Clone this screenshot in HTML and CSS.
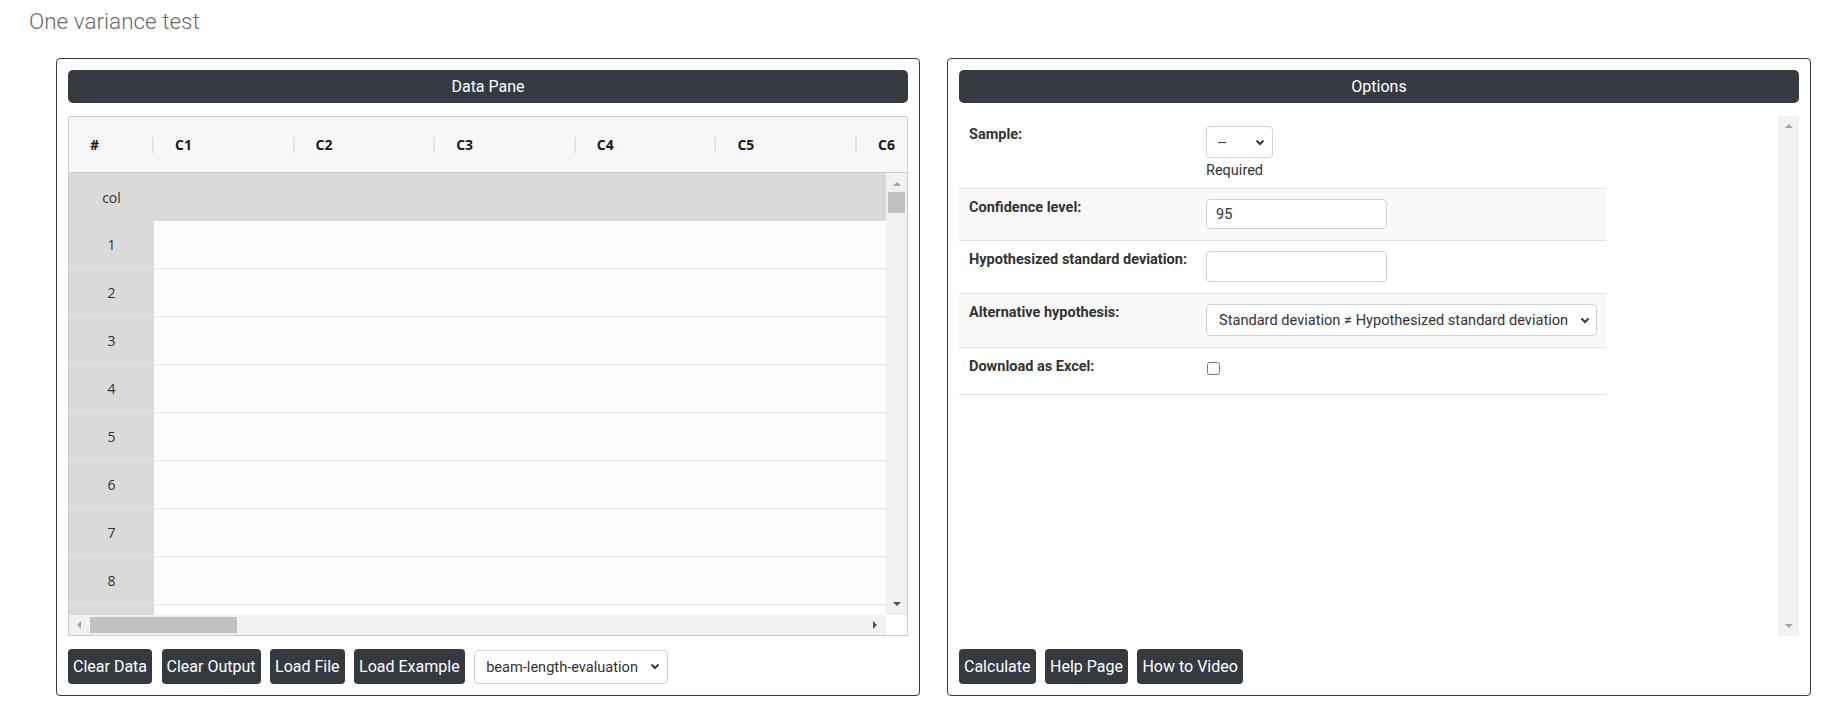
FILE: index.html
```html
<!DOCTYPE html>
<html lang="en">
  <head>
    <meta charset="UTF-8" />
    <meta name="viewport" content="width=device-width, initial-scale=1.0" />
    <title>One variance test</title>
    <link rel="stylesheet" href="styles.css">
  </head>
  <body>
    <h1 class="page-title">One variance test</h1>

    <div class="panels">
      <!-- データ入力 -->
      <section class="panel">
        <div class="panel-head">Data Pane</div>

        <div class="grid">
          <div class="grid-head">
            <div class="gh-index">#</div>
            <div class="gh-cell">C1</div>
            <div class="gh-cell">C2</div>
            <div class="gh-cell">C3</div>
            <div class="gh-cell">C4</div>
            <div class="gh-cell">C5</div>
            <div class="gh-cell">C6</div>
          </div>

          <div class="grid-main">
            <div class="grid-rows">
              <div class="grid-row row-col"><div class="rh">col</div><div class="cells"></div></div>
              <div class="grid-row"><div class="rh">1</div><div class="cells"></div></div>
              <div class="grid-row"><div class="rh">2</div><div class="cells"></div></div>
              <div class="grid-row"><div class="rh">3</div><div class="cells"></div></div>
              <div class="grid-row"><div class="rh">4</div><div class="cells"></div></div>
              <div class="grid-row"><div class="rh">5</div><div class="cells"></div></div>
              <div class="grid-row"><div class="rh">6</div><div class="cells"></div></div>
              <div class="grid-row"><div class="rh">7</div><div class="cells"></div></div>
              <div class="grid-row"><div class="rh">8</div><div class="cells"></div></div>
              <div class="grid-row"><div class="rh"></div><div class="cells"></div></div>
            </div>
            <div class="vscroll">
              <span class="arrow up off"></span>
              <span class="vthumb"></span>
              <span class="vfill"></span>
              <span class="arrow down"></span>
            </div>
          </div>

          <div class="hscroll-row">
            <div class="hscroll">
              <span class="arrow left off"></span>
              <span class="hthumb"></span>
              <span class="hfill"></span>
              <span class="arrow right"></span>
            </div>
            <div class="corner"></div>
          </div>
        </div>

        <div class="toolbar">
          <button class="btn">Clear Data</button>
          <button class="btn">Clear Output</button>
          <button class="btn">Load File</button>
          <button class="btn">Load Example</button>
          <div class="select example-select">
            <select><option>beam-length-evaluation</option></select>
            <svg width="10" height="7" viewBox="0 0 10 7"><path d="M1.5 1.5l3.5 3.5 3.5-3.5" fill="none" stroke="#343a40" stroke-width="2"/></svg>
          </div>
        </div>
      </section>

      <!-- オプション -->
      <section class="panel">
        <div class="panel-head">Options</div>

        <div class="options">
          <div class="opt-table">
            <div class="opt-row sample-row">
              <div class="opt-label">Sample:</div>
              <div class="opt-value">
                <div class="select sample-select">
                  <select><option>--</option></select>
                  <svg width="10" height="7" viewBox="0 0 10 7"><path d="M1.5 1.5l3.5 3.5 3.5-3.5" fill="none" stroke="#343a40" stroke-width="2"/></svg>
                </div>
                <div class="hint">Required</div>
              </div>
            </div>
            <div class="opt-row striped">
              <div class="opt-label">Confidence level:</div>
              <div class="opt-value"><input class="text-input conf" type="text" value="95" /></div>
            </div>
            <div class="opt-row">
              <div class="opt-label">Hypothesized standard deviation:</div>
              <div class="opt-value"><input class="text-input hyp" type="text" value="" /></div>
            </div>
            <div class="opt-row striped">
              <div class="opt-label">Alternative hypothesis:</div>
              <div class="opt-value">
                <div class="select alt-select">
                  <select><option>Standard deviation ≠ Hypothesized standard deviation</option></select>
                  <svg width="10" height="7" viewBox="0 0 10 7"><path d="M1.5 1.5l3.5 3.5 3.5-3.5" fill="none" stroke="#343a40" stroke-width="2"/></svg>
                </div>
              </div>
            </div>
            <div class="opt-row">
              <div class="opt-label">Download as Excel:</div>
              <div class="opt-value check-cell"><input type="checkbox" class="check" /></div>
            </div>
          </div>
          <div class="vscroll opt-scroll">
            <span class="arrow up off"></span>
            <span class="vfill"></span>
            <span class="arrow down off"></span>
          </div>
        </div>

        <div class="toolbar">
          <button class="btn">Calculate</button>
          <button class="btn">Help Page</button>
          <button class="btn">How to Video</button>
        </div>
      </section>
    </div>
  </body>
</html>
```

FILE: styles.css
```css
body {
  margin: 0;
  font-family: Roboto, "Liberation Sans", sans-serif;
  color: #333;
  background: #fff;
}
.page-title {
  margin: 0;
  padding: 7px 0 0 29px;
  font-size: 22.5px;
  line-height: 28px;
  font-weight: 300;
  color: #6a6a6a;
}
.panels {
  display: flex;
  gap: 27px;
  margin-top: 23px;
  padding-left: 56px;
}
.panel {
  width: 864px;
  height: 638px;
  box-sizing: border-box;
  border: 1px solid #343a40;
  border-radius: 4px;
  padding: 11px;
  display: flex;
  flex-direction: column;
  gap: 13px;
}
.panel-head {
  height: 33px;
  line-height: 33px;
  background: #343a40;
  color: #fff;
  border-radius: 5px;
  text-align: center;
  font-size: 16px;
}

/* データグリッド */
.grid {
  height: 520px;
  box-sizing: border-box;
  border: 1px solid #cccccc;
  display: flex;
  flex-direction: column;
  font-family: "Open Sans", "Noto Sans", sans-serif;
  font-size: 14px;
}
.grid-head {
  height: 55px;
  flex: none;
  display: flex;
  align-items: center;
  background: #f7f7f7;
  border-bottom: 1px solid #cccccc;
  overflow: hidden;
  font-weight: 700;
  color: #1a1a1a;
}
.gh-index {
  width: 83px;
  flex: none;
  box-sizing: border-box;
  padding-left: 21px;
}
.gh-cell {
  width: 140.6px;
  flex: none;
  box-sizing: border-box;
  display: flex;
  align-items: center;
  gap: 21px;
}
.gh-cell::before {
  content: "";
  width: 2px;
  height: 16px;
  background: #e2e2e2;
}
.grid-main {
  flex: 1;
  display: flex;
  min-height: 0;
}
.grid-rows {
  flex: 1;
  overflow: hidden;
}
.grid-row {
  height: 48px;
  display: flex;
}
.rh {
  width: 85px;
  flex: none;
  box-sizing: border-box;
  background: #dadada;
  border-bottom: 1px solid #e6e6e6;
  display: flex;
  align-items: center;
  justify-content: center;
  color: #333;
}
.cells {
  flex: 1;
  background: #fdfdfd;
  border-bottom: 1px solid #e4e4e4;
}
.row-col .rh,
.row-col .cells {
  background: #dadada;
  border-bottom: none;
}

/* スクロールバー */
.vscroll {
  width: 21px;
  flex: none;
  background: #f1f1f1;
  display: flex;
  flex-direction: column;
  align-items: center;
}
.vscroll .arrow.up {
  margin-top: 9px;
}
.vscroll .arrow.down {
  margin-bottom: 9px;
}
.vthumb {
  width: 17px;
  height: 21px;
  margin-top: 6px;
  background: #c1c1c1;
}
.vfill,
.hfill {
  flex: 1;
}
.hscroll-row {
  height: 20px;
  flex: none;
  display: flex;
}
.hscroll {
  flex: 1;
  background: #f1f1f1;
  display: flex;
  align-items: center;
}
.hscroll .arrow.left {
  margin-left: 8px;
}
.hscroll .arrow.right {
  margin-right: 9px;
}
.hthumb {
  width: 147px;
  height: 16px;
  margin-left: 9px;
  background: #c1c1c1;
}
.corner {
  width: 21px;
  background: #fff;
}
.arrow {
  width: 0;
  height: 0;
  border: 4px solid transparent;
}
.arrow.up {
  border-top: none;
  border-bottom-color: #505050;
}
.arrow.down {
  border-bottom: none;
  border-top-color: #505050;
}
.arrow.left {
  border-left: none;
  border-right-color: #505050;
}
.arrow.right {
  border-right: none;
  border-left-color: #505050;
}
.arrow.up.off {
  border-bottom-color: #a3a3a3;
}
.arrow.down.off {
  border-top-color: #a3a3a3;
}
.arrow.left.off {
  border-right-color: #a3a3a3;
}

/* ボタン */
.toolbar {
  height: 35px;
  flex: none;
  display: flex;
  align-items: center;
  gap: 9.5px;
}
.btn {
  height: 35px;
  padding: 0 5px;
  border: none;
  border-radius: 4px;
  background: #343a40;
  color: #fff;
  font-family: Roboto, "Liberation Sans", sans-serif;
  font-size: 16px;
  cursor: pointer;
}

/* セレクト */
.select {
  display: flex;
  align-items: center;
  box-sizing: border-box;
  border: 1px solid #ced4da;
  border-radius: 4px;
  background: #fff;
}
.select select {
  flex: 1;
  min-width: 0;
  appearance: none;
  -webkit-appearance: none;
  border: none;
  background: transparent;
  padding: 0;
  font-family: Roboto, "Liberation Sans", sans-serif;
  font-size: 14.6px;
  color: #333;
  outline: none;
}
.example-select {
  width: 194px;
  height: 34px;
  padding: 0 7px 0 11px;
}
.sample-select {
  width: 67px;
  height: 32px;
  padding: 0 7px 0 11px;
}
.alt-select {
  width: 391px;
  height: 32px;
  padding: 0 6px 0 12px;
}

/* オプション */
.options {
  height: 520px;
  display: flex;
  justify-content: space-between;
}
.opt-table {
  width: 647px;
  align-self: flex-start;
}
.opt-row {
  display: grid;
  grid-template-columns: 247px 1fr;
  border-bottom: 1px solid #dee2e6;
  font-size: 14.5px;
}
.opt-row.striped {
  background: #f9f9f9;
}
.opt-label {
  padding: 10px 10px 11px;
  font-weight: 700;
  line-height: 17px;
  color: #333;
}
.opt-value {
  padding: 10px 0 11px;
}
.sample-row .opt-value {
  padding-bottom: 10px;
}
.hint {
  margin-top: 5px;
  line-height: 15px;
  color: #333;
}
.text-input {
  display: block;
  width: 181px;
  box-sizing: border-box;
  border: 1px solid #ced4da;
  border-radius: 4px;
  padding: 0 9px;
  font-family: Roboto, "Liberation Sans", sans-serif;
  font-size: 14.5px;
  color: #333;
  outline: none;
}
.text-input.conf {
  height: 30px;
}
.text-input.hyp {
  height: 31px;
}
.check-cell {
  height: 25px;
}
.check {
  width: 13px;
  height: 13px;
  margin: 4px 0 0 1px;
}
.opt-scroll .arrow.up {
  margin-top: 8px;
}
.opt-scroll .arrow.down {
  margin-bottom: 8px;
}
```
